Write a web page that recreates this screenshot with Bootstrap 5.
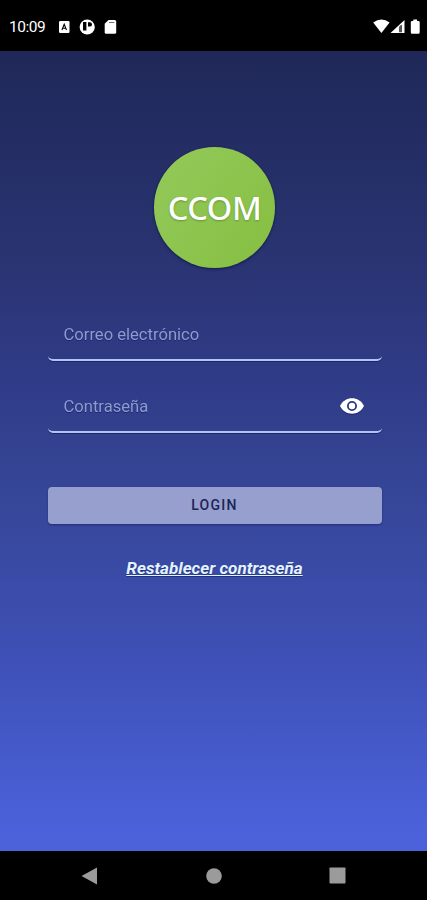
<!DOCTYPE html>
<html lang="es">
<head>
<meta charset="utf-8">
<meta name="viewport" content="width=device-width, initial-scale=1">
<title>CCOM</title>
<link href="https://cdn.jsdelivr.net/npm/bootstrap@5.3.0/dist/css/bootstrap.min.css" rel="stylesheet">
<style>
body { font-family: Roboto, "Liberation Sans", sans-serif; background: #000; height: 900px; overflow: hidden; }
.status-bar { height: 51px; padding: 2px 7px 0 9px; }
.clock { font-size: 15.5px; line-height: 20px; width: 50px; letter-spacing: -.5px; }
.screen { height: 800px; padding: 96px 45.5px 0 47.5px; background: linear-gradient(#1f2858 0%, #293370 24%, #303c88 42%, #364698 56%, #3e50b5 75%, #4a61d9 97%, #4b62db 100%); }
.logo { width: 121px; height: 121px; background: linear-gradient(125deg, #94c95a, #86bf42); box-shadow: 0 1px 3px rgba(5,12,50,.65); color: #fff; font: 500 32.5px/121px "Noto Sans", sans-serif; letter-spacing: -.4px; text-shadow: 0 1px 2px rgba(50,90,20,.45); }
.first-field { margin-top: 37px; }
.field { height: 56px; border: 0 solid #b4c4f2; border-bottom-width: 2px; border-radius: 0 0 5px 5px; filter: drop-shadow(0 1px 0 #1b2774); }
.field .form-control { font-size: 16.6px; color: #fff; padding: 4px 16px 0; height: 54px; box-shadow: none; }
.field .form-control::placeholder { color: #8e9bcc; opacity: 1; }
.eye { padding: 4px 17px 0 0; }
.login { height: 37px; margin-top: 54px; background: #979fcf; border: 0; border-radius: 4px; color: #1c2456; font-size: 14px; font-weight: 500; letter-spacing: 1.3px; box-shadow: 0 1px 2px rgba(20,30,100,.6); padding: 0; }
.reset { margin-top: 32px; font-size: 17.1px; line-height: 24px; font-weight: 700; font-style: italic; color: #e3f3ff; text-shadow: 0 1px 1px rgba(20,30,90,.6); }
.reset:hover { color: #fff; }
.system-nav { height: 49px; padding: 0 81px; }
</style>
</head>
<body>
<header class="status-bar d-flex align-items-center justify-content-between text-white">
  <div class="d-flex align-items-center">
    <span class="clock">10:09</span>
    <svg width="60" height="18" viewBox="59 17.3 60 18" fill="#fff">
      <rect x="59" y="20.3" width="10.5" height="12" rx="1.3"/>
      <path d="M61.9 29.3l2.3-5.8 2.3 5.8M62.8 27.5h2.8" fill="none" stroke="#000" stroke-width="1.1"/>
      <circle cx="87.2" cy="26.3" r="7.6"/>
      <path d="M83 21.4h3.4v8.4H83zM88 21.5h1.8a2.2 2.2 0 0 1 0 4.4H88z" fill="#000"/>
      <path d="M108.5 19.2h6.2q1.5 0 1.5 1.5v10.8q0 1.5-1.5 1.5h-8.5q-1.5 0-1.5-1.5v-8.5z"/>
      <path d="M109 21.8h5.4" stroke="#777" stroke-width="1"/>
    </svg>
  </div>
  <svg width="48" height="18" viewBox="372 17.3 48 18" fill="#fff">
    <path d="M373.2 21.8q8.2-5.8 16.4 0L381.4 32.3z"/>
    <path d="M404.5 19.4v13h-14z"/>
    <path d="M399 26.2q1.5-2.2 3-2.2v7.5h-3z" fill="#555"/>
    <path d="M413.3 18.8h3.8v1.4h1.3q1.3 0 1.3 1.3v10q0 1.5-1.3 1.5h-6.3q-1.3 0-1.3-1.5v-10q0-1.3 1.3-1.3h1.2z"/>
  </svg>
</header>
<main class="screen">
  <div class="logo rounded-circle text-center mx-auto">CCOM</div>
  <form>
    <div class="field first-field d-flex">
      <input type="email" class="form-control bg-transparent border-0" placeholder="Correo electrónico" aria-label="Correo electrónico">
    </div>
    <div class="field d-flex align-items-center mt-3">
      <input type="password" class="form-control bg-transparent border-0" placeholder="Contraseña" aria-label="Contraseña">
      <button type="button" class="btn border-0 eye d-flex" aria-label="Mostrar contraseña">
        <svg width="26" height="18" viewBox="0 0 26 18">
          <path d="M1 9C6-1.3 20-1.3 25 9C20 19.3 6 19.3 1 9z" fill="#fff"/>
          <circle cx="13" cy="9" r="4.1" fill="none" stroke="#2d3980" stroke-width="1.8"/>
        </svg>
      </button>
    </div>
    <button type="button" class="btn login w-100 d-block">LOGIN</button>
  </form>
  <a href="#" class="reset d-block text-center text-decoration-underline">Restablecer contraseña</a>
</main>
<nav class="system-nav d-flex align-items-center justify-content-between" aria-label="Sistema">
  <svg width="17" height="18" fill="#9b9b9b"><path d="M0.5 9L16 .5v17z"/></svg>
  <svg width="16" height="16" fill="#9b9b9b"><circle cx="8" cy="8" r="7.8"/></svg>
  <svg width="17" height="17" fill="#9b9b9b"><rect x=".5" y=".5" width="16" height="16" rx=".7"/></svg>
</nav>
<script src="https://cdn.jsdelivr.net/npm/bootstrap@5.3.0/dist/js/bootstrap.bundle.min.js"></script>
</body>
</html>
